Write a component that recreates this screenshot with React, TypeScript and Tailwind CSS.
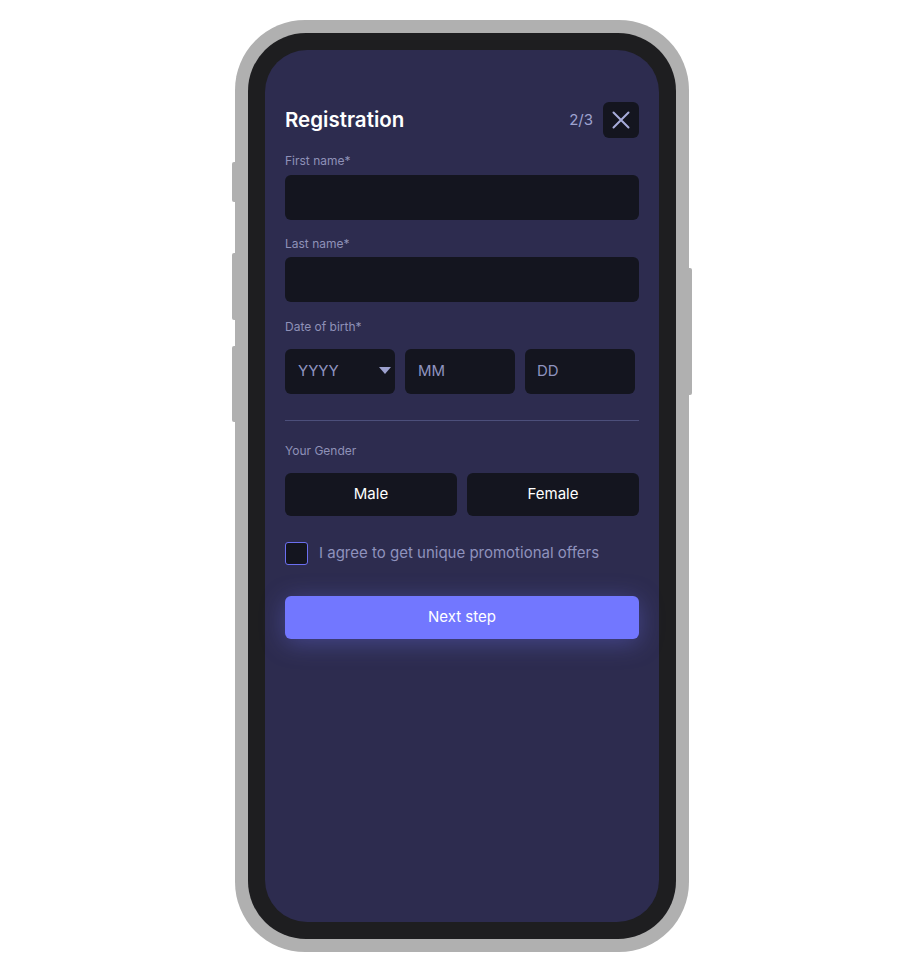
import React, { useState } from 'react';

export default function App() {
  const [gender, setGender] = useState<'male' | 'female' | null>(null);
  const [agree, setAgree] = useState(false);

  const field = 'w-full h-[45px] rounded-[6px] bg-[#14151f] outline-none px-3 text-[15px] text-white';
  const label = 'block h-[18px] leading-[20px] text-[12px] text-[#8f91b8]';

  return (
    <div className="min-h-[972px] bg-white flex justify-center pt-5 font-['Inter','Noto_Sans',sans-serif]">
      <div className="relative w-[454px] h-[932px] rounded-[70px] bg-[#b0b0b0] p-[13px]">
        {/* side buttons */}
        <div className="absolute left-[-3px] top-[142px] w-[4px] h-[40px] rounded-l-[2px] bg-[#b0b0b0]" />
        <div className="absolute left-[-3px] top-[233px] w-[4px] h-[67px] rounded-l-[2px] bg-[#b0b0b0]" />
        <div className="absolute left-[-3px] top-[326px] w-[4px] h-[76px] rounded-l-[2px] bg-[#b0b0b0]" />
        <div className="absolute right-[-3px] top-[248px] w-[4px] h-[127px] rounded-r-[2px] bg-[#b0b0b0]" />

        <div className="h-full rounded-[58px] bg-[#1e1e20] p-[17px]">
          <div className="h-full rounded-[42px] bg-[#2d2c4f] px-5 pt-[52px]">
            <div className="flex items-center h-9">
              <h1 className="flex-1 text-[20.5px] font-semibold text-white">Registration</h1>
              <span className="text-[15px] text-[#9ea2cf] mr-[10px]">2/3</span>
              <button className="w-9 h-9 rounded-[6px] bg-[#14151f] flex items-center justify-center">
                <svg width="18" height="18" viewBox="0 0 18 18" fill="none" stroke="#a8acdb" strokeWidth="2" strokeLinecap="round">
                  <path d="M1.5 1.5L16.5 16.5M16.5 1.5L1.5 16.5" />
                </svg>
              </button>
            </div>

            <label className={`${label} mt-[13px]`}>First name*</label>
            <input className={`${field} mt-[6px]`} />

            <label className={`${label} mt-[14px]`}>Last name*</label>
            <input className={`${field} mt-[5px]`} />

            <label className={`${label} mt-[15px]`}>Date of birth*</label>
            <div className="flex gap-[10px] mt-[14px]">
              <div className="relative w-[110px] h-[45px] rounded-[6px] bg-[#14151f] flex items-center pl-[13px] text-[15px] text-[#8f93bf]">
                YYYY
                <svg className="absolute right-[4px] top-[18px]" width="12" height="8" viewBox="0 0 12 8">
                  <path d="M0 0H12L6 7Z" fill="#9da1cf" />
                </svg>
              </div>
              <div className="w-[110px] h-[45px] rounded-[6px] bg-[#14151f] flex items-center pl-[13px] text-[15px] text-[#8f93bf]">MM</div>
              <div className="w-[110px] h-[45px] rounded-[6px] bg-[#14151f] flex items-center pl-[12px] text-[15px] text-[#8f93bf]">DD</div>
            </div>

            <div className="h-px bg-[#4c4f7b] mt-[26px]" />

            <label className={`${label} mt-[20px]`}>Your Gender</label>
            <div className="flex gap-[10px] mt-[14px]">
              <button
                onClick={() => setGender('male')}
                className="flex-1 h-[43px] rounded-[6px] bg-[#14151f] text-white text-[15px]"
              >
                Male
              </button>
              <button
                onClick={() => setGender('female')}
                className="flex-1 h-[43px] rounded-[6px] bg-[#14151f] text-white text-[15px]"
              >
                Female
              </button>
            </div>

            <div className="flex items-center mt-[26px]" onClick={() => setAgree(!agree)}>
              <div className="w-[23px] h-[23px] rounded-[3px] border border-[#6b6ff0] bg-[#14151f]" />
              <span className="ml-[11px] text-[15px] text-[#8f92bd]">I agree to get unique promotional offers</span>
            </div>

            <button className="w-full h-[43px] mt-[31px] rounded-[6px] bg-[#7277ff] text-white text-[15px] shadow-[0_4px_24px_rgba(114,119,255,0.35)]">
              Next step
            </button>
          </div>
        </div>
      </div>
    </div>
  );
}
